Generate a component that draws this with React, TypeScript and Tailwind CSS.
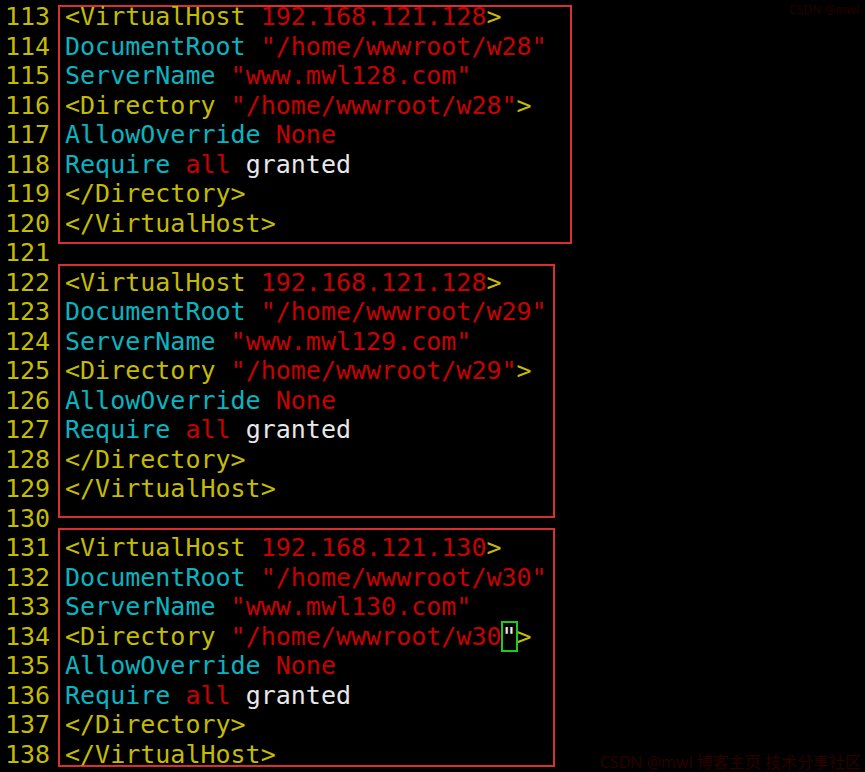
import React from 'react';

type Seg = { t: string; c: string; cursor?: boolean };

const Y = 'text-[#c4bc00]';
const C = 'text-[#08b4c0]';
const R = 'text-[#c80000]';
const W = 'text-[#e8e8e8]';

const vhost = (ip: string, dir: string, name: string, cursor = false): Seg[][] => [
    [{ t: '<VirtualHost', c: Y }, { t: ' ', c: W }, { t: ip, c: R }, { t: '>', c: Y }],
    [{ t: 'DocumentRoot', c: C }, { t: ' ', c: W }, { t: `"/home/wwwroot/${dir}"`, c: R }],
    [{ t: 'ServerName', c: C }, { t: ' ', c: W }, { t: `"${name}"`, c: R }],
    cursor
        ? [
              { t: '<Directory', c: Y },
              { t: ' ', c: W },
              { t: `"/home/wwwroot/${dir}`, c: R },
              { t: '"', c: W, cursor: true },
              { t: '>', c: Y },
          ]
        : [{ t: '<Directory', c: Y }, { t: ' ', c: W }, { t: `"/home/wwwroot/${dir}"`, c: R }, { t: '>', c: Y }],
    [{ t: 'AllowOverride', c: C }, { t: ' ', c: W }, { t: 'None', c: R }],
    [{ t: 'Require', c: C }, { t: ' ', c: W }, { t: 'all', c: R }, { t: ' ', c: W }, { t: 'granted', c: W }],
    [{ t: '</Directory>', c: Y }],
    [{ t: '</VirtualHost>', c: Y }],
];

const blocks = [
    { lines: vhost('192.168.121.128', 'w28', 'www.mwl128.com'), box: 'mt-0 w-[514px] h-[239px]', inner: '-mt-[5px]' },
    { lines: vhost('192.168.121.128', 'w29', 'www.mwl129.com'), box: 'mt-[20px] w-[497px] h-[254px]', inner: 'mt-[1.5px]' },
    { lines: vhost('192.168.121.130', 'w30', 'www.mwl130.com', true), box: 'mt-[10px] w-[497px] h-[239px]', inner: 'mt-[3px]' },
];

const Line = ({ segs }: { segs: Seg[] }) => (
    <div className="h-[29.5px]">
        {segs.map((s, j) =>
            s.cursor ? (
                <span key={j} className={`${s.c} outline-2 outline-[#1ccc1c] -outline-offset-1`}>
                    {s.t}
                </span>
            ) : (
                <span key={j} className={s.c}>
                    {s.t}
                </span>
            ),
        )}
    </div>
);

const App = () => (
    <div
        className="relative w-[865px] h-[772px] bg-black overflow-hidden flex text-[25px] leading-[29.5px] whitespace-pre"
        style={{ fontFamily: '"DejaVu Sans Mono", "Liberation Mono", monospace' }}
    >
        {/* line numbers */}
        <div className={`flex flex-col pt-[2px] pl-[5px] w-[58px] ${Y}`}>
            {Array.from({ length: 26 }, (_, i) => (
                <div key={i} className="h-[29.5px]">
                    {113 + i}
                </div>
            ))}
        </div>

        {/* code, grouped in the red annotation boxes */}
        <div className="flex flex-col pt-[5px]">
            {blocks.map((b, i) => (
                <div key={i} className={`border-2 border-[#d83030] shrink-0 ${b.box}`}>
                    <div className={`flex flex-col pl-[5px] ${b.inner}`}>
                        {b.lines.map((segs, k) => (
                            <Line key={k} segs={segs} />
                        ))}
                    </div>
                </div>
            ))}
        </div>

        {/* faint watermarks */}
        <div
            className="absolute right-[6px] top-[4px] text-[12px] leading-none text-[#240000]"
            style={{ fontFamily: '"Noto Sans", "Noto Sans CJK SC", sans-serif' }}
        >
            CSDN @mwl
        </div>
        <div
            className="absolute right-[4px] bottom-[2px] text-[16px] leading-none text-[#2a0000]"
            style={{ fontFamily: '"Noto Sans", "Noto Sans CJK SC", sans-serif' }}
        >
            CSDN @mwl 博客主页 技术分享社区
        </div>
    </div>
);

export default App;
